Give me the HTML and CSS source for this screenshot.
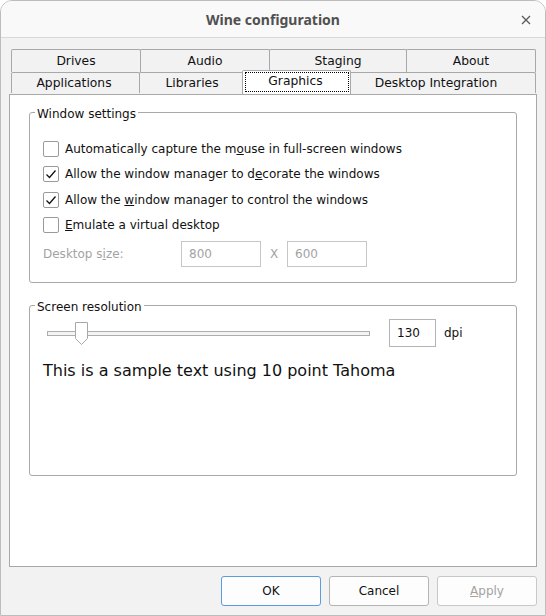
FILE: index.html
```html
<!DOCTYPE html>
<html>
<head>
<meta charset="utf-8">
<link rel="stylesheet" href="styles.css">
</head>
<body>
<div class="window">
  <div class="titlebar">
    <span></span>
    <span class="title">Wine configuration</span>
    <span class="close"><svg width="10" height="10" viewBox="0 0 10 10"><path d="M1 1 L9 9 M9 1 L1 9" stroke="#5a5a5a" stroke-width="1.3" fill="none"/></svg></span>
  </div>
  <div class="body">
    <div class="tabs">
      <div class="tabrow row1">
        <div class="tab t-drives">Drives</div>
        <div class="tab t-audio">Audio</div>
        <div class="tab t-staging">Staging</div>
        <div class="tab t-about">About</div>
      </div>
      <div class="tabrow row2">
        <div class="tab t-apps">Applications</div>
        <div class="tab t-libs">Libraries</div>
        <div class="tab t-graphics sel"><span class="focus">Graphics</span></div>
        <div class="tab t-desktop">Desktop Integration</div>
      </div>
    </div>
    <div class="panel">
      <fieldset class="group g1">
        <legend>Window settings</legend>
        <div class="check"><span class="box"></span><span>Automatically capture the m<u>o</u>use in full-screen windows</span></div>
        <div class="check"><span class="box"><svg width="14" height="14" viewBox="0 0 14 14"><path d="M2.5 7.5 L5.5 10.5 L11.5 3.5" stroke="#111" stroke-width="1.3" fill="none"/></svg></span><span>Allow the window manager to d<u>e</u>corate the windows</span></div>
        <div class="check"><span class="box"><svg width="14" height="14" viewBox="0 0 14 14"><path d="M2.5 7.5 L5.5 10.5 L11.5 3.5" stroke="#111" stroke-width="1.3" fill="none"/></svg></span><span>Allow the <u>w</u>indow manager to control the windows</span></div>
        <div class="check"><span class="box"></span><span><u>E</u>mulate a virtual desktop</span></div>
        <div class="size-row">
          <span class="size-label">Desktop s<u>i</u>ze:</span>
          <span class="field">800</span>
          <span class="x">X</span>
          <span class="field">600</span>
        </div>
      </fieldset>
      <fieldset class="group g2">
        <legend>Screen resolution</legend>
        <div class="dpi-row">
          <div class="slider">
            <div class="track"></div>
            <svg class="thumb" width="13" height="23" viewBox="0 0 13 23"><path d="M0.5 0.5 H12.5 V16.5 L6.5 22.5 L0.5 16.5 Z" fill="#fff" stroke="#a8a8a8" stroke-width="1"/></svg>
          </div>
          <span class="dpi-box">130</span>
          <span class="dpi-unit">dpi</span>
        </div>
        <p class="sample">This is a sample text using 10 point Tahoma</p>
      </fieldset>
    </div>
    <div class="buttons">
      <span class="btn ok">OK</span>
      <span class="btn">Cancel</span>
      <span class="btn disabled"><u>A</u>pply</span>
    </div>
  </div>
</div>
</body>
</html>
```
FILE: styles.css
```css
html { background: #ffffff; }
body {
  margin: 0;
  font-family: "DejaVu Sans", sans-serif;
  font-size: 12px;
  color: #111;
}
.window {
  box-sizing: border-box;
  width: 546px;
  height: 616px;
  border: 1px solid #bdbdbd;
  border-radius: 12px 12px 0 0;
  background: #f2f2f2;
  display: flex;
  flex-direction: column;
  overflow: hidden;
}
.titlebar {
  height: 36px;
  flex: none;
  background: #f9f9f9;
  border-bottom: 1px solid #d9d9d9;
  display: grid;
  grid-template-columns: 1fr auto 1fr;
  align-items: center;
}
.title {
  font-family: "Noto Sans", sans-serif;
  font-weight: bold;
  font-size: 14px;
  color: #505050;
}
.close {
  justify-self: end;
  margin-right: 14px;
  display: flex;
  padding-top: 1px;
}
.body {
  flex: 1;
  display: flex;
  flex-direction: column;
  padding: 11px 8px 0 8px;
}
.tabs { margin-left: 2px; }
.tabrow { display: flex; }
.tab {
  box-sizing: border-box;
  border: 1px solid #a8a8a8;
  border-bottom: none;
  border-radius: 2px 2px 0 0;
  background: #f2f2f2;
  margin-left: -1px;
  display: flex;
  align-items: center;
  justify-content: center;
  white-space: nowrap;
  padding-bottom: 1px;
  font-size: 12.3px;
}
.tab:first-child { margin-left: 0; }
.row1 .tab { height: 23px; }
.row2 .tab { height: 21px; }
.t-drives { width: 130px; }
.t-audio { width: 130px; }
.t-staging { width: 138px; }
.t-about { width: 130px; }
.t-apps { width: 129px; padding-right: 3px; }
.t-libs { width: 106px; }
.t-graphics { width: 109px; }
.t-desktop { width: 188px; padding-right: 12px; }
.tab.sel {
  position: relative;
  z-index: 2;
  background: #ffffff;
  margin-left: -3px;
  margin-right: -2px;
  margin-top: -2px;
  height: 24px;
  align-items: stretch;
  padding: 1px 1px 2px 2px;
}
.focus {
  flex: 1;
  border: 1px dotted #000;
  display: flex;
  align-items: center;
  justify-content: center;
  padding-bottom: 2px;
  padding-right: 3px;
}
.panel {
  box-sizing: border-box;
  height: 473px;
  flex: none;
  border: 1px solid #a8a8a8;
  background: #ffffff;
  padding: 7px 19px 0 19px;
}
.group {
  margin: 0;
  border: 1px solid #a8a8a8;
  border-radius: 3px;
  padding: 0 0 0 13px;
}
.group legend {
  margin-left: -8px;
  padding: 4px 2px 0 2px;
  line-height: 16px;
}
.g1 { padding-top: 14px; padding-bottom: 15px; }
.check {
  height: 25.5px;
  display: flex;
  align-items: center;
}
.box {
  box-sizing: border-box;
  width: 16px;
  height: 16px;
  border: 1px solid #9a9a9a;
  border-radius: 2px;
  background: #fff;
  margin-right: 6px;
  display: flex;
  align-items: center;
  justify-content: center;
  flex: none;
}
.size-row {
  margin-top: 3px;
  display: flex;
  align-items: center;
  color: #a3a3a3;
}
.size-label { width: 138px; }
.field {
  box-sizing: border-box;
  width: 80px;
  height: 26px;
  border: 1px solid #c6c6c6;
  padding-left: 7px;
  display: flex;
  align-items: center;
}
.x { width: 26px; text-align: center; }
.g2 {
  margin-top: 12px;
  height: 181px;
  box-sizing: border-box;
  padding-top: 4px;
}
.dpi-row {
  display: flex;
  align-items: center;
  height: 28px;
}
.slider {
  position: relative;
  width: 323px;
  height: 23px;
  margin-left: 4px;
  margin-right: 19px;
}
.track {
  box-sizing: border-box;
  margin-top: 9px;
  height: 5px;
  border: 1px solid #adadad;
  background: #f4f4f4;
}
.thumb {
  position: absolute;
  left: 28px;
  top: 0;
}
.dpi-box {
  box-sizing: border-box;
  width: 47px;
  height: 28px;
  border: 1px solid #b4b4b4;
  padding-left: 7px;
  display: flex;
  align-items: center;
}
.dpi-unit { margin-left: 8px; }
.sample {
  margin: 13px 0 0 0;
  font-size: 16px;
  line-height: 22px;
}
.buttons {
  display: flex;
  justify-content: flex-end;
  gap: 8px;
  margin-top: 9px;
}
.btn {
  box-sizing: border-box;
  width: 100px;
  height: 30px;
  border: 1px solid #b4b4b4;
  border-radius: 3px;
  background: #fdfdfd;
  display: flex;
  align-items: center;
  justify-content: center;
}
.btn.ok { border-color: #5b9be0; }
.btn.disabled { color: #a3a3a3; border-color: #c8c8c8; }
```
